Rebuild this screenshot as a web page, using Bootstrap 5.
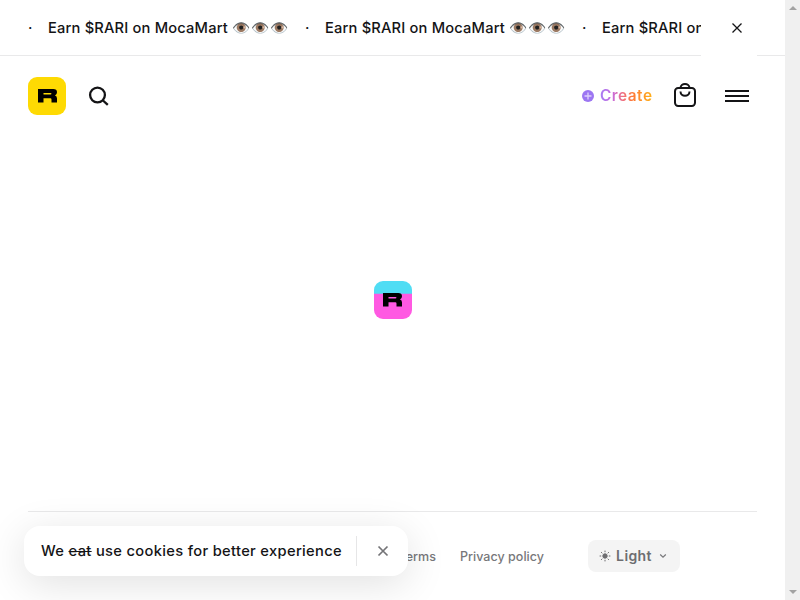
<!DOCTYPE html>
<html lang="en">
<head>
<meta charset="utf-8">
<meta name="viewport" content="width=device-width, initial-scale=1">
<title>Rarible</title>
<link href="https://cdn.jsdelivr.net/npm/bootstrap@5.3.0/dist/css/bootstrap.min.css" rel="stylesheet">
<style>
body{font-family:Inter,"Noto Color Emoji",sans-serif;color:#141416;font-size:15px;font-weight:500;height:600px;overflow:hidden;background:#fff}
svg{display:block;flex:none}
.page-col{width:785px;height:600px}
.promo{height:56px;border-bottom:1px solid #e9e9ea;padding-left:28px}
.ticker{width:673px;height:56px;white-space:nowrap}
.ticker-item{width:277px;flex:none;line-height:24px;font-size:14.7px;letter-spacing:.17px}
.ticker-dot{width:20px;flex:none}
.eyes{letter-spacing:.8px}
.promo-close{width:56px;height:56px;margin-bottom:-1px;background:#fff;border:0;padding:0 0 0 16px}
.topbar{height:80px;padding:0 36px 0 28px}
.create{font-size:15.4px;width:53px;font-weight:600;line-height:24px;letter-spacing:.48px;margin:0 20px 0 6px;background:linear-gradient(90deg,#a57bf5 0%,#c86cdc 24%,#f0707d 44%,#ff7a35 62%,#ffb317 100%);-webkit-background-clip:text;background-clip:text;color:transparent}
.bag{margin:-2px 28px 0 0}
.foot{margin:0 28px;height:89px;border-top:1px solid #e9e9ea;font-size:12.5px;letter-spacing:.03px;color:#77777a}
.foot-links{gap:24px;padding:2px 44px 0 0}
.theme-btn{width:92px;height:32px;border-radius:8px;background:#f4f4f4;color:#6d6d70;font-size:14px;font-weight:600;border:0;margin-right:77px;padding:0 0 0 11px}
.theme-label{margin:-2px 0 0 5px;width:36px;letter-spacing:.4px}
.cookie{left:24px;top:526px;width:384px;height:50px;border-radius:16px;background:#fff;box-shadow:0 8px 40px rgba(0,0,0,.12);padding-left:17px}
.cookie-sep{width:1px;height:30px;background:#e6e6e7}
.cookie-text{width:315px;font-size:14.7px;letter-spacing:.33px}
.scroll-rail{width:15px;height:600px;background:#f0f0f0;padding:6px 0 6px 4px}
.loader{margin-top:145px}
.chev{margin-left:7px}
</style>
<script src="https://cdn.jsdelivr.net/npm/bootstrap@5.3.0/dist/js/bootstrap.bundle.min.js"></script>
</head>
<body class="d-flex">
<svg width="0" height="0" class="position-absolute">
  <defs>
    <path id="brand-r" fill="#000" fill-rule="evenodd" d="M10 12H25.200Q29 12 29 15.300Q29 17.800 27 18.600Q29 19.200 29 21.500V25.500H23.500V22.400Q23.500 21.300 22.400 21.300H15.500V25.500H10ZM15.500 16.100V17.500H22.400Q23.500 17.500 23.500 16.800Q23.500 16.100 22.400 16.100Z"/>
  </defs>
</svg>
<div class="page-col d-flex flex-column position-relative overflow-hidden flex-shrink-0">
  <div class="promo d-flex">
    <div class="ticker d-flex align-items-center overflow-hidden">
      <div class="ticker-item d-flex"><span class="ticker-dot">·</span><span>Earn $RARI on MocaMart <span class="eyes">👁️👁️👁️</span></span></div>
      <div class="ticker-item d-flex"><span class="ticker-dot">·</span><span>Earn $RARI on MocaMart <span class="eyes">👁️👁️👁️</span></span></div>
      <div class="ticker-item d-flex"><span class="ticker-dot">·</span><span>Earn $RARI on MocaMart <span class="eyes">👁️👁️👁️</span></span></div>
    </div>
    <button class="promo-close d-flex align-items-center justify-content-start flex-shrink-0" aria-label="Close"><svg width="40" height="16" viewBox="0 0 40 16"><path d="M15.500 3.500l9 9M24.500 3.500l-9 9" stroke="#141416" stroke-width="1.300"/></svg></button>
  </div>
  <header class="topbar d-flex align-items-center">
    <svg width="38" height="38" viewBox="0 0 38 38"><rect width="38" height="38" rx="9" fill="#feda03"/><use href="#brand-r"/></svg>
    <svg class="ms-3" width="34" height="24" viewBox="0 0 34 24" fill="none" stroke="#141416" stroke-width="2.300"><circle cx="15.500" cy="11" r="7.400"/><path d="M21 16.500l4.800 4.400"/></svg>
    <div class="ms-auto d-flex align-items-center">
      <svg width="12" height="12" viewBox="0 0 12 12"><circle cx="6" cy="6" r="6" fill="#9c76f2"/><path d="M6 2.500v7M2.500 6h7" stroke="#ddd0fc" stroke-width="1.300"/></svg>
      <span class="create">Create</span>
      <svg class="bag" width="24" height="26" viewBox="0 0 24 26" fill="none" stroke="#141416" stroke-width="2"><rect x="2" y="6" width="20" height="18" rx="3.200"/><path d="M7.500 6C7.500 .6 16.500 .6 16.500 6M7.500 9.500C7.500 15.200 16.500 15.200 16.500 9.500"/></svg>
      <svg width="24" height="12" viewBox="0 0 24 12" fill="#141416"><path d="M0 0h24v2H0zM0 5h24v2H0zM0 10h24v2H0z"/></svg>
    </div>
  </header>
  <main class="flex-grow-1 d-flex justify-content-center">
    <svg class="loader" width="38" height="38" viewBox="0 0 38 38"><clipPath id="tile"><rect width="38" height="38" rx="9"/></clipPath><g clip-path="url(#tile)"><path fill="#50ddf4" d="M0 0h38v13H0z"/><path fill="#ff59e2" d="M0 12.700h38V38H0z"/></g><use href="#brand-r" x="-1"/></svg>
  </main>
  <footer class="foot d-flex align-items-center justify-content-end flex-shrink-0">
    <div class="foot-links d-flex"><span>Terms</span><span>Privacy policy</span></div>
    <button class="theme-btn d-flex align-items-center">
      <svg width="12" height="12" viewBox="0 0 12 12" stroke="#6d6d70" stroke-width="1"><circle cx="6" cy="6" r="2.200" fill="#6d6d70"/><path d="M6 .6v1.600M6 9.800v1.600M.6 6h1.600M9.800 6h1.600M2.100 2.100l1.200 1.200M8.700 8.700l1.200 1.200M2.100 9.900l1.200-1.200M8.700 3.300l1.200-1.200"/></svg>
      <span class="theme-label text-nowrap">Light</span>
      <svg class="chev" width="8" height="6" viewBox="0 0 8 6"><path d="M1.200 1.500L4 4.200l2.800-2.700" fill="none" stroke="#77777a" stroke-width="1.200"/></svg>
    </button>
  </footer>
  <div class="cookie d-flex align-items-center position-absolute">
    <div class="cookie-text text-nowrap">We <s>eat</s> use cookies for better experience</div>
    <div class="cookie-sep"></div>
    <svg width="50" height="16" viewBox="0 0 50 16"><path d="M21.500 3.500l9 9M30.500 3.500l-9 9" stroke="#747477" stroke-width="1.700"/></svg>
  </div>
</div>
<div class="scroll-rail d-flex flex-column justify-content-between flex-shrink-0">
  <svg width="8" height="4" viewBox="0 0 8 4"><path d="M0 4l4-4 4 4z" fill="#a3a3a3"/></svg>
  <svg width="8" height="4" viewBox="0 0 8 4"><path d="M0 0l4 4 4-4z" fill="#a3a3a3"/></svg>
</div>
</body>
</html>
